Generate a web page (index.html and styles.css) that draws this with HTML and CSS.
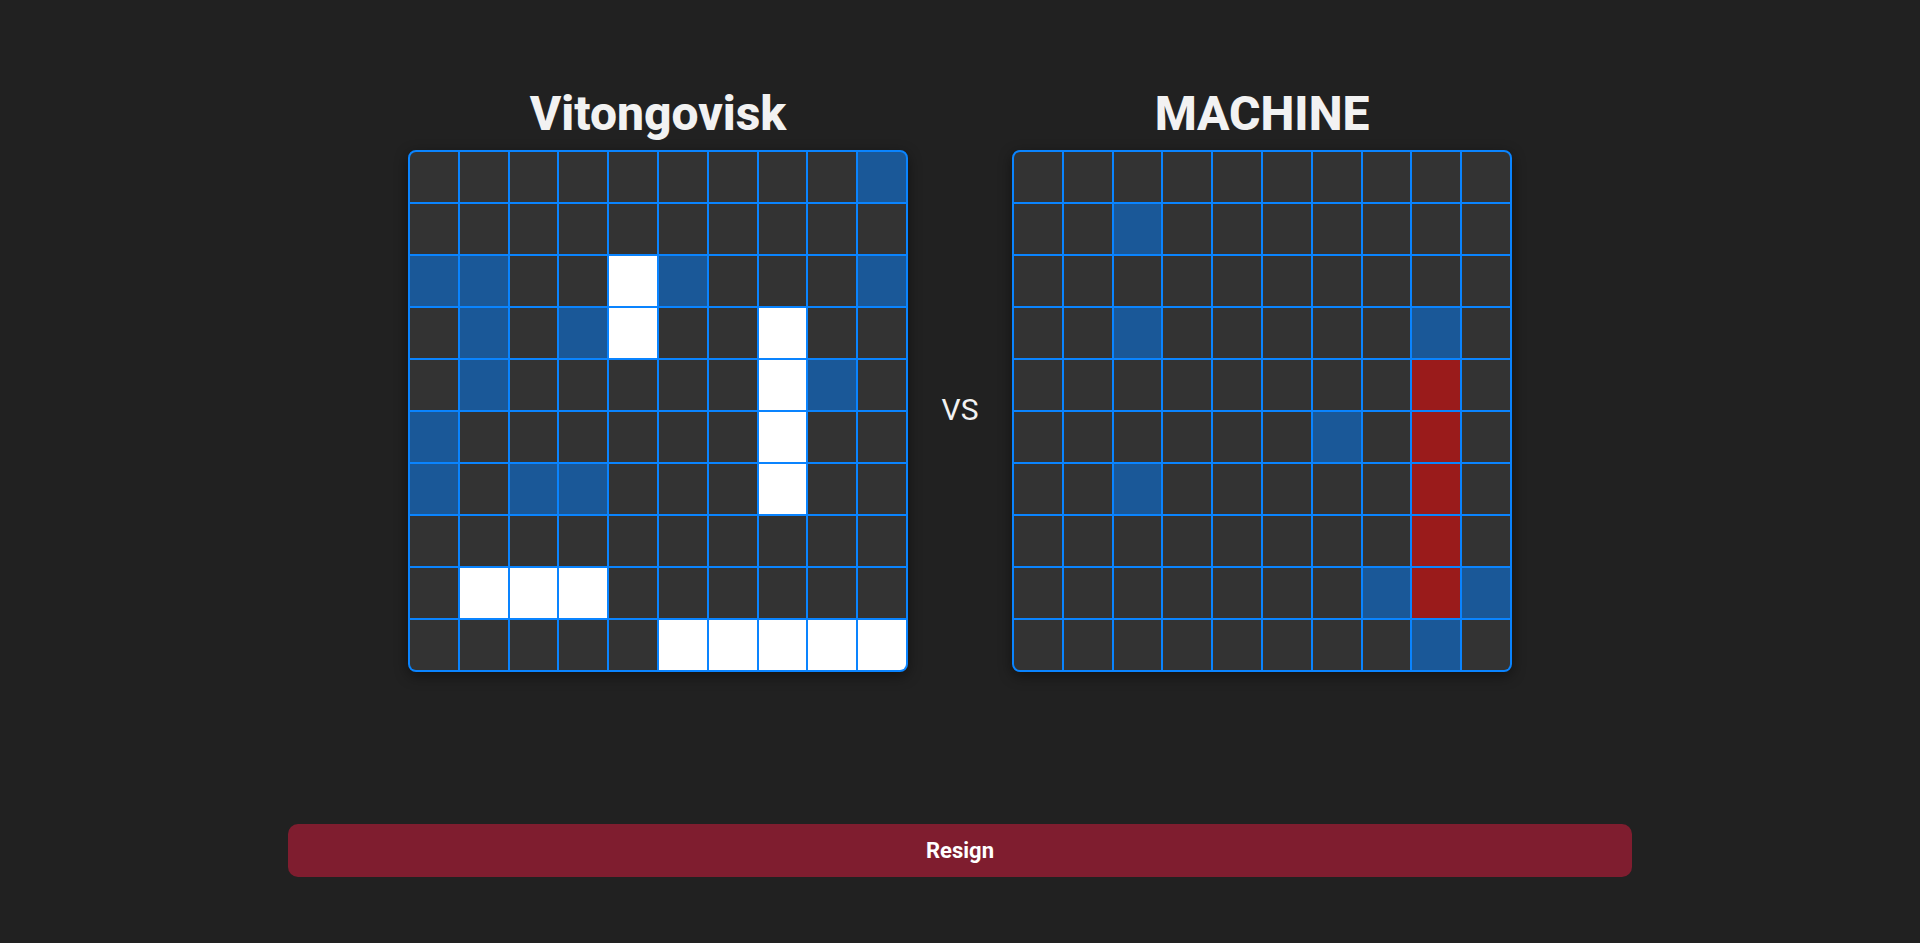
FILE: index.html
```html
<!DOCTYPE html>
<html lang="en">
<head>
<meta charset="utf-8">
<title>Battleship</title>
<link rel="stylesheet" href="styles.css">
</head>
<body>
<main class="page">
  <section class="arena">
    <h2 class="title t-left">Vitongovisk</h2>
    <h2 class="title t-right">MACHINE</h2>
    <div class="board b-left">
      <div class="c"></div><div class="c"></div><div class="c"></div><div class="c"></div><div class="c"></div><div class="c"></div><div class="c"></div><div class="c"></div><div class="c"></div><div class="c b"></div>
      <div class="c"></div><div class="c"></div><div class="c"></div><div class="c"></div><div class="c"></div><div class="c"></div><div class="c"></div><div class="c"></div><div class="c"></div><div class="c"></div>
      <div class="c b"></div><div class="c b"></div><div class="c"></div><div class="c"></div><div class="c w"></div><div class="c b"></div><div class="c"></div><div class="c"></div><div class="c"></div><div class="c b"></div>
      <div class="c"></div><div class="c b"></div><div class="c"></div><div class="c b"></div><div class="c w"></div><div class="c"></div><div class="c"></div><div class="c w"></div><div class="c"></div><div class="c"></div>
      <div class="c"></div><div class="c b"></div><div class="c"></div><div class="c"></div><div class="c"></div><div class="c"></div><div class="c"></div><div class="c w"></div><div class="c b"></div><div class="c"></div>
      <div class="c b"></div><div class="c"></div><div class="c"></div><div class="c"></div><div class="c"></div><div class="c"></div><div class="c"></div><div class="c w"></div><div class="c"></div><div class="c"></div>
      <div class="c b"></div><div class="c"></div><div class="c b"></div><div class="c b"></div><div class="c"></div><div class="c"></div><div class="c"></div><div class="c w"></div><div class="c"></div><div class="c"></div>
      <div class="c"></div><div class="c"></div><div class="c"></div><div class="c"></div><div class="c"></div><div class="c"></div><div class="c"></div><div class="c"></div><div class="c"></div><div class="c"></div>
      <div class="c"></div><div class="c w"></div><div class="c w"></div><div class="c w"></div><div class="c"></div><div class="c"></div><div class="c"></div><div class="c"></div><div class="c"></div><div class="c"></div>
      <div class="c"></div><div class="c"></div><div class="c"></div><div class="c"></div><div class="c"></div><div class="c w"></div><div class="c w"></div><div class="c w"></div><div class="c w"></div><div class="c w"></div>
    </div>
    <div class="vs">VS</div>
    <div class="board b-right">
      <div class="c"></div><div class="c"></div><div class="c"></div><div class="c"></div><div class="c"></div><div class="c"></div><div class="c"></div><div class="c"></div><div class="c"></div><div class="c"></div>
      <div class="c"></div><div class="c"></div><div class="c b"></div><div class="c"></div><div class="c"></div><div class="c"></div><div class="c"></div><div class="c"></div><div class="c"></div><div class="c"></div>
      <div class="c"></div><div class="c"></div><div class="c"></div><div class="c"></div><div class="c"></div><div class="c"></div><div class="c"></div><div class="c"></div><div class="c"></div><div class="c"></div>
      <div class="c"></div><div class="c"></div><div class="c b"></div><div class="c"></div><div class="c"></div><div class="c"></div><div class="c"></div><div class="c"></div><div class="c b"></div><div class="c"></div>
      <div class="c"></div><div class="c"></div><div class="c"></div><div class="c"></div><div class="c"></div><div class="c"></div><div class="c"></div><div class="c"></div><div class="c r"></div><div class="c"></div>
      <div class="c"></div><div class="c"></div><div class="c"></div><div class="c"></div><div class="c"></div><div class="c"></div><div class="c b"></div><div class="c"></div><div class="c r"></div><div class="c"></div>
      <div class="c"></div><div class="c"></div><div class="c b"></div><div class="c"></div><div class="c"></div><div class="c"></div><div class="c"></div><div class="c"></div><div class="c r"></div><div class="c"></div>
      <div class="c"></div><div class="c"></div><div class="c"></div><div class="c"></div><div class="c"></div><div class="c"></div><div class="c"></div><div class="c"></div><div class="c r"></div><div class="c"></div>
      <div class="c"></div><div class="c"></div><div class="c"></div><div class="c"></div><div class="c"></div><div class="c"></div><div class="c"></div><div class="c b"></div><div class="c r"></div><div class="c b"></div>
      <div class="c"></div><div class="c"></div><div class="c"></div><div class="c"></div><div class="c"></div><div class="c"></div><div class="c"></div><div class="c"></div><div class="c b"></div><div class="c"></div>
    </div>
  </section>
  <button class="resign" type="button">Resign</button>
</main>
</body>
</html>
```

FILE: styles.css
```css
html, body {
  margin: 0;
  padding: 0;
  background: #212121;
  height: 100%;
}

body {
  font-family: Roboto, "Liberation Sans", sans-serif;
  color: #f2f2f2;
}

.page {
  display: flex;
  flex-direction: column;
  align-items: center;
  padding-top: 86px;
}

.arena {
  display: grid;
  grid-template-columns: 500px 104px 500px;
  grid-template-rows: auto auto;
  row-gap: 8px;
}

.title {
  margin: 0;
  font-size: 48px;
  line-height: 56px;
  font-weight: 800;
  text-align: center;
  color: #f2f2f2;
}

.t-left { grid-column: 1; grid-row: 1; }
.t-right { grid-column: 3; grid-row: 1; }

.board {
  grid-row: 2;
  box-sizing: border-box;
  width: 500px;
  height: 522px;
  border: 2px solid #0a84ff;
  border-radius: 8px;
  background: #0a84ff;
  overflow: hidden;
  display: grid;
  grid-template-columns: repeat(10, 1fr);
  grid-template-rows: repeat(10, 1fr);
  gap: 2px;
  box-shadow: 0 4px 14px rgba(0, 0, 0, 0.45);
}

.b-left { grid-column: 1; }
.b-right { grid-column: 3; }

.c { background: #333333; }
.c.b { background: #1a5898; }
.c.w { background: #ffffff; }
.c.r { background: #9a1b1b; }

.vs {
  grid-column: 2;
  grid-row: 2;
  align-self: center;
  text-align: center;
  font-size: 30px;
  font-weight: 400;
  color: #f2f2f2;
  margin-top: -4px;
}

.resign {
  margin-top: 152px;
  width: 1344px;
  height: 53px;
  border: none;
  border-radius: 10px;
  background: #7f1d2f;
  color: #ffffff;
  font-family: Roboto, "Liberation Sans", sans-serif;
  font-size: 22px;
  font-weight: 700;
  cursor: pointer;
}
```
